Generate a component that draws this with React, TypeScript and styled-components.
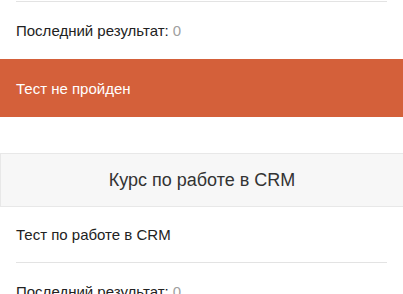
import styled, { createGlobalStyle } from 'styled-components';

const GlobalStyle = createGlobalStyle`
  html, body {
    margin: 0;
    padding: 0;
    background: #ffffff;
  }
  body {
    font-family: "Liberation Sans", Arial, sans-serif;
    color: #333333;
    -webkit-font-smoothing: antialiased;
  }
`;

const Page = styled.div`
  width: 403px;
  padding-top: 1px;
  display: flex;
  flex-direction: column;
`;

const Course = styled.section`
  display: flex;
  flex-direction: column;
`;

const CourseHeader = styled.h2`
  margin: 36px 0 0;
  height: 54px;
  display: flex;
  align-items: center;
  justify-content: center;
  background: #f7f7f7;
  border: 1px solid #e8e8e8;
  border-right: none;
  box-sizing: border-box;
  font-size: 18px;
  font-weight: normal;
  color: #333333;
`;

const Row = styled.div<{ $divider?: boolean; $height: number }>`
  margin: 0 16px;
  height: ${({ $height }) => $height}px;
  display: flex;
  align-items: center;
  font-size: 15px;
  color: #222222;
  box-sizing: border-box;
  ${({ $divider }) => $divider && `border-top: 1px solid #e3e3e3;`}
`;

const Score = styled.span`
  color: #a0a0a0;
  margin-left: 4px;
`;

const StatusBar = styled.div<{ $status: 'failed' | 'passed' }>`
  height: 58px;
  padding: 0 16px;
  display: flex;
  align-items: center;
  font-size: 15px;
  color: #ffffff;
  background: ${({ $status }) => ($status === 'failed' ? '#d4603a' : '#5aa55a')};
`;

const ResultRow = ({ score }: { score: number }) => (
  <Row $divider $height={58}>
    Последний результат:<Score>{score}</Score>
  </Row>
);

export default function App() {
  return (
    <>
      <GlobalStyle />
      <Page>
        <Course>
          <ResultRow score={0} />
          <StatusBar $status="failed">Тест не пройден</StatusBar>
        </Course>
        <Course>
          <CourseHeader>Курс по работе в CRM</CourseHeader>
          <Row $height={55}>Тест по работе в CRM</Row>
          <ResultRow score={0} />
        </Course>
      </Page>
    </>
  );
}
